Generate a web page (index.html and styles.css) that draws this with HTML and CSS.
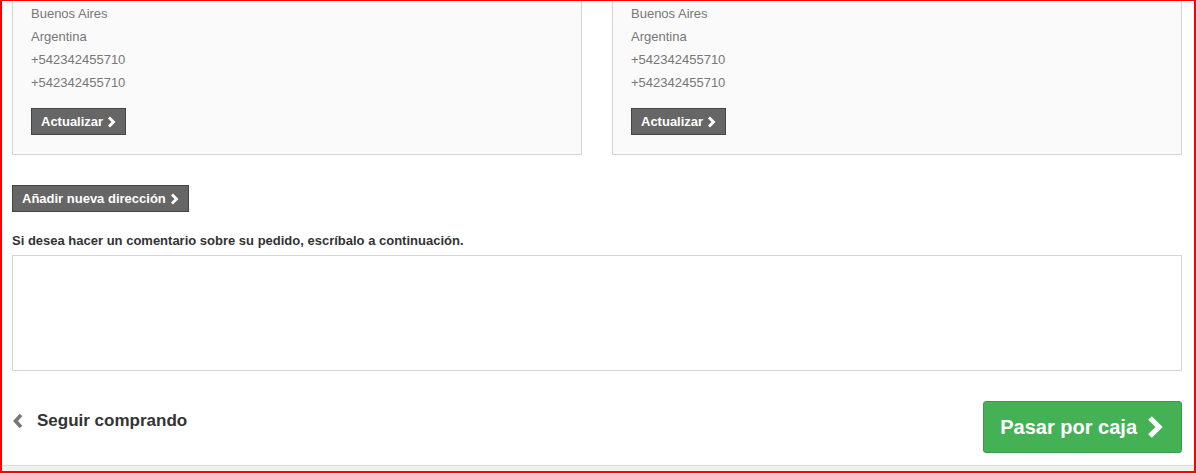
FILE: index.html
```html
<!DOCTYPE html>
<html lang="es">
<head>
    <meta charset="UTF-8">
    <meta name="viewport" content="width=device-width, initial-scale=1.0">
    <title>Direcciones</title>
    <link rel="stylesheet" href="styles.css">
</head>
<body>
    <div class="frame">
        <div class="addresses">
            <div class="address-box">
                <p>Buenos Aires</p>
                <p>Argentina</p>
                <p>+542342455710</p>
                <p>+542342455710</p>
                <button class="btn-small">Actualizar
                    <svg class="chev" width="9" height="12" viewBox="0 0 9 12"><polyline points="2,1.5 6.5,6 2,10.5" fill="none" stroke="#fff" stroke-width="2.8"/></svg>
                </button>
            </div>
            <div class="address-box">
                <p>Buenos Aires</p>
                <p>Argentina</p>
                <p>+542342455710</p>
                <p>+542342455710</p>
                <button class="btn-small">Actualizar
                    <svg class="chev" width="9" height="12" viewBox="0 0 9 12"><polyline points="2,1.5 6.5,6 2,10.5" fill="none" stroke="#fff" stroke-width="2.8"/></svg>
                </button>
            </div>
        </div>

        <button class="btn-small add-btn">Añadir nueva dirección
            <svg class="chev" width="9" height="12" viewBox="0 0 9 12"><polyline points="2,1.5 6.5,6 2,10.5" fill="none" stroke="#fff" stroke-width="2.8"/></svg>
        </button>

        <label class="comment-label" for="comment">Si desea hacer un comentario sobre su pedido, escríbalo a continuación.</label>
        <textarea id="comment" class="comment"></textarea>

        <div class="footer">
            <a class="back-link" href="#">
                <svg width="12" height="16" viewBox="0 0 12 16"><polyline points="9,2 3.5,8 9,14" fill="none" stroke="#777" stroke-width="3.6"/></svg>
                Seguir comprando
            </a>
            <button class="btn-checkout">Pasar por caja
                <svg width="18" height="26" viewBox="0 0 18 26"><polyline points="4,4 13,13 4,22" fill="none" stroke="#fff" stroke-width="5.2"/></svg>
            </button>
        </div>

        <div class="bottom-strip"></div>
    </div>
</body>
</html>
```

FILE: styles.css
```css
body {
    margin: 0;
    font-family: "Liberation Sans", Arial, sans-serif;
    background-color: #fff;
}

.frame {
    width: 1196px;
    height: 473px;
    box-sizing: border-box;
    border: 2px solid #f00;
    border-top-width: 1px;
    padding: 0 12px 0 10px;
    display: flex;
    flex-direction: column;
    align-items: flex-start;
    overflow: hidden;
}

.addresses {
    display: flex;
    gap: 30px;
    width: 100%;
}

.address-box {
    flex: 1;
    background-color: #fafafa;
    border: 1px solid #d5d5d5;
    border-top: none;
    padding: 1px 18px 19px;
}

.address-box p {
    margin: 0;
    font-size: 13px;
    line-height: 23px;
    color: #777;
}

.btn-small {
    margin-top: 14px;
    height: 27px;
    padding: 0 9px;
    display: flex;
    align-items: center;
    gap: 4px;
    white-space: nowrap;
    font-family: "Liberation Sans", Arial, sans-serif;
    font-size: 13px;
    font-weight: bold;
    color: #fff;
    background-color: #666;
    border: 1px solid #444;
    border-radius: 0;
    cursor: pointer;
}

.add-btn {
    margin-top: 30px;
}

.comment-label {
    margin-top: 21px;
    font-size: 13px;
    line-height: 16px;
    font-weight: bold;
    color: #333;
}

.comment {
    margin-top: 6px;
    width: 100%;
    height: 116px;
    box-sizing: border-box;
    border: 1px solid #d5d5d5;
    resize: none;
}

.footer {
    width: 100%;
    margin-top: 30px;
    display: flex;
    justify-content: space-between;
    align-items: flex-start;
}

.back-link {
    margin-top: 10px;
    display: flex;
    align-items: center;
    gap: 13px;
    font-size: 17px;
    line-height: 20px;
    font-weight: bold;
    color: #333;
    text-decoration: none;
}

.btn-checkout {
    height: 52px;
    padding: 0 17px 0 16px;
    display: flex;
    align-items: center;
    gap: 9px;
    white-space: nowrap;
    font-family: "Liberation Sans", Arial, sans-serif;
    font-size: 20px;
    font-weight: bold;
    color: #fff;
    background-color: #45b155;
    border: 1px solid #3a9a47;
    border-radius: 3px;
    cursor: pointer;
}

.bottom-strip {
    margin: 12px -12px 0 -10px;
    align-self: stretch;
    flex: 1;
    background-color: #f0f0f0;
    border-top: 1px solid #dcdcdc;
}
```
